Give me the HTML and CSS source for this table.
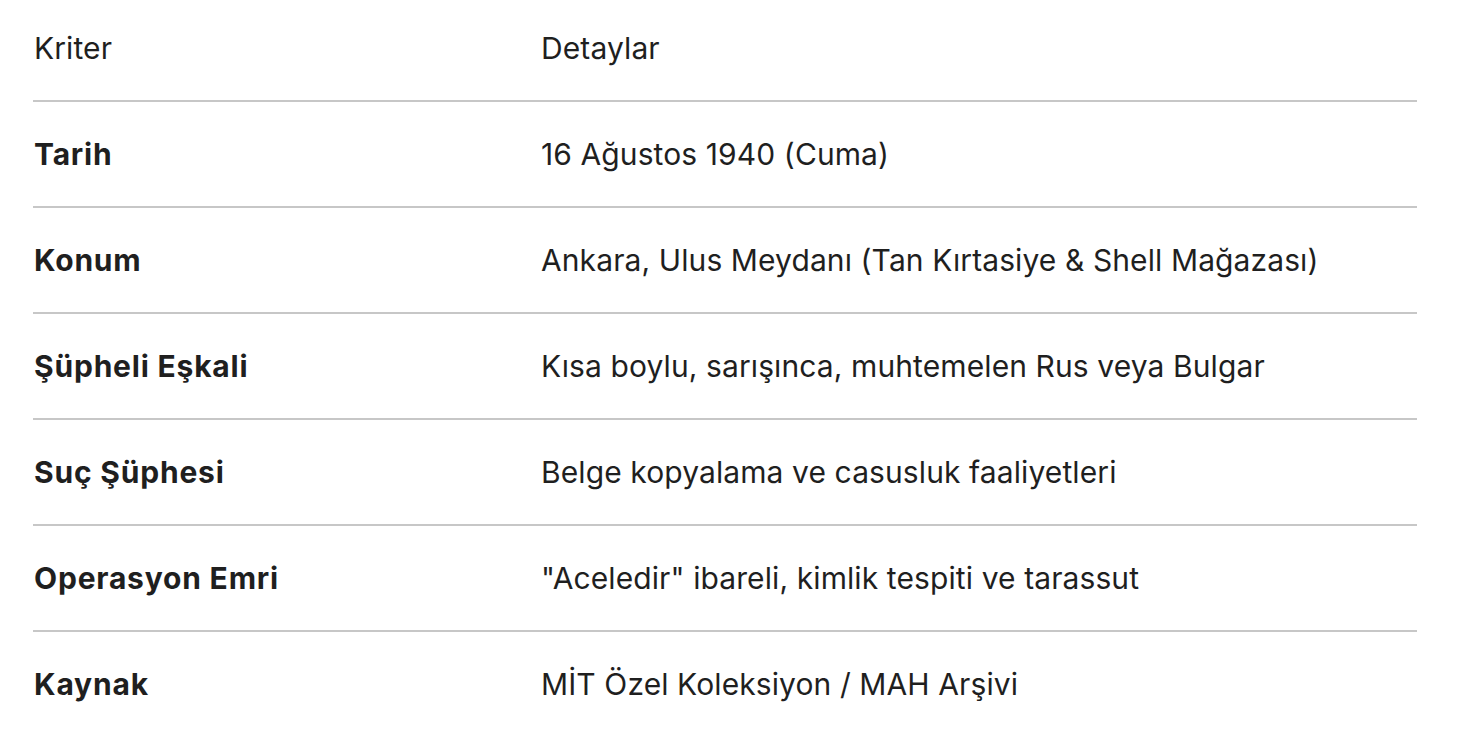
FILE: index.html
```html
<!DOCTYPE html>
<html lang="tr">
<head>
<meta charset="utf-8">
<link rel="stylesheet" href="styles.css">
</head>
<body>
<table class="info">
  <thead>
    <tr><th class="c1">Kriter</th><th class="c2">Detaylar</th></tr>
  </thead>
  <tbody>
    <tr><td class="c1 key">Tarih</td><td class="c2">16 Ağustos 1940 (Cuma)</td></tr>
    <tr><td class="c1 key">Konum</td><td class="c2">Ankara, Ulus Meydanı (Tan Kırtasiye &amp; Shell Mağazası)</td></tr>
    <tr><td class="c1 key">Şüpheli Eşkali</td><td class="c2">Kısa boylu, sarışınca, muhtemelen Rus veya Bulgar</td></tr>
    <tr><td class="c1 key">Suç Şüphesi</td><td class="c2">Belge kopyalama ve casusluk faaliyetleri</td></tr>
    <tr><td class="c1 key">Operasyon Emri</td><td class="c2">"Aceledir" ibareli, kimlik tespiti ve tarassut</td></tr>
    <tr class="last"><td class="c1 key">Kaynak</td><td class="c2">MİT Özel Koleksiyon / MAH Arşivi</td></tr>
  </tbody>
</table>
</body>
</html>
```
FILE: styles.css
```css
html, body {
  margin: 0;
  padding: 0;
  background: #ffffff;
}
body {
  font-family: Inter, Roboto, "Noto Sans", sans-serif;
  color: #1f1f1f;
  font-size: 30px;
  letter-spacing: 0.1px;
}
.info {
  margin-left: 33px;
  width: 1384px;
  border-collapse: collapse;
  table-layout: fixed;
}
.info th, .info td {
  text-align: left;
  padding: 0;
  vertical-align: middle;
  border-bottom: 2px solid #c7c7c7;
}
.info th {
  font-weight: 400;
  height: 96px;
  padding-bottom: 4px;
}
.info td {
  height: 104px;
}
.info .c1 { width: 507px; padding-left: 1px; }
.info .key { font-weight: 700; letter-spacing: 0.8px; }
.info tr.last td { border-bottom: none; }
```
